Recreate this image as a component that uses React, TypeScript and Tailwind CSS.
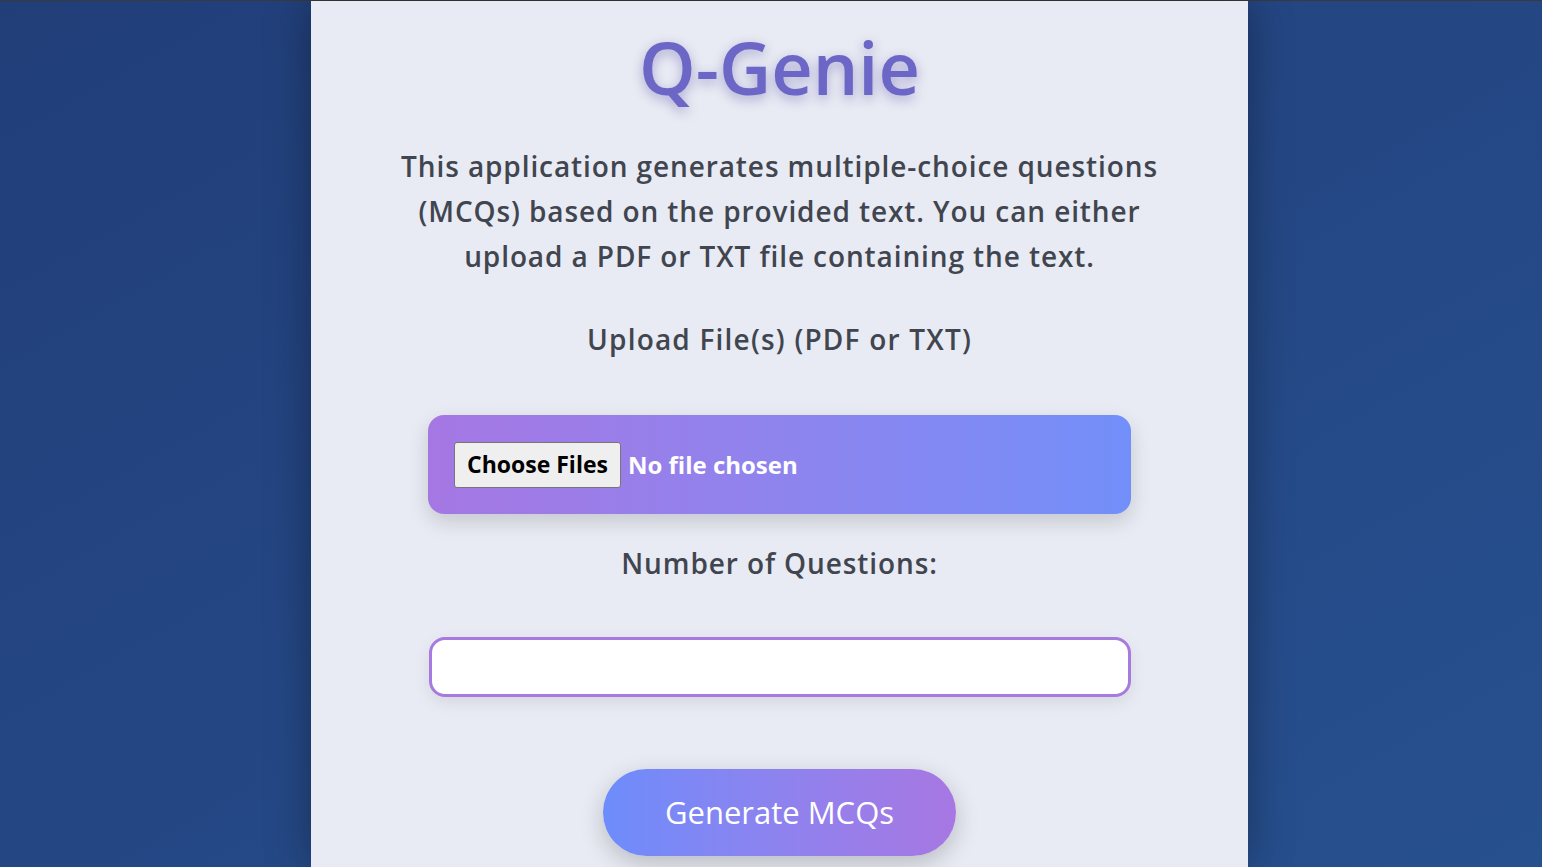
import React, { useState } from 'react';

export default function App() {
  const [count, setCount] = useState('');

  return (
    <div
      className="min-h-[867px] w-full border-t border-[#3a3a3a] bg-gradient-to-br from-[#213e79] to-[#27508f] flex justify-center pl-[17px]"
      style={{ fontFamily: '"Open Sans", "Noto Sans", sans-serif' }}
    >
      <div className="w-[937px] min-h-[866px] bg-[#e8ebf3] shadow-[0_0_40px_rgba(0,0,0,0.35)] flex flex-col items-center pt-[14px]">
        {/* Title */}
        <h1 className="text-[72px] leading-[104px] font-semibold text-[#6c67c6] [text-shadow:0_4px_12px_rgba(90,80,170,0.45)]">
          Q-Genie
        </h1>

        {/* Description */}
        <p className="mt-[25px] w-[800px] text-center text-[28px] leading-[45px] font-semibold text-[#41454f] tracking-[0.9px]">
          This application generates multiple-choice questions (MCQs) based on the provided text. You can either upload a PDF or TXT file containing the text.
        </p>

        <label className="mt-[40px] text-[28px] leading-[40px] font-semibold text-[#41454f] tracking-[1.2px]">
          Upload File(s) (PDF or TXT)
        </label>

        {/* File picker */}
        <div className="mt-[56px] w-[703px] h-[99px] rounded-[16px] bg-gradient-to-r from-[#a577e3] to-[#728ff9] shadow-[0_8px_20px_rgba(0,0,0,0.15)] flex items-center pl-[26px]">
          <label className="flex items-center gap-[7px] cursor-pointer">
            <span className="h-[46px] px-[12px] flex items-center bg-[#efefef] border border-[#767676] rounded-[3px] text-[23px] font-bold text-black">
              Choose Files
            </span>
            <span className="text-[24px] font-bold text-white">No file chosen</span>
            <input type="file" multiple accept=".pdf,.txt" className="hidden" />
          </label>
        </div>

        <label className="mt-[29px] text-[28px] leading-[40px] font-semibold text-[#41454f] tracking-[0.9px]">
          Number of Questions:
        </label>

        {/* Number input */}
        <input
          type="number"
          value={count}
          onChange={(e) => setCount(e.target.value)}
          className="mt-[54px] w-[702px] h-[60px] rounded-[16px] border-[3px] border-[#a77ae0] bg-white px-4 text-[22px] outline-none shadow-[0_6px_16px_rgba(0,0,0,0.08)]"
        />

        {/* Submit */}
        <button className="mt-[72px] w-[353px] h-[87px] rounded-full bg-gradient-to-r from-[#6d8cfb] to-[#a777e2] text-white text-[31px] shadow-[0_8px_24px_rgba(0,0,0,0.2)]">
          Generate MCQs
        </button>
      </div>
    </div>
  );
}
